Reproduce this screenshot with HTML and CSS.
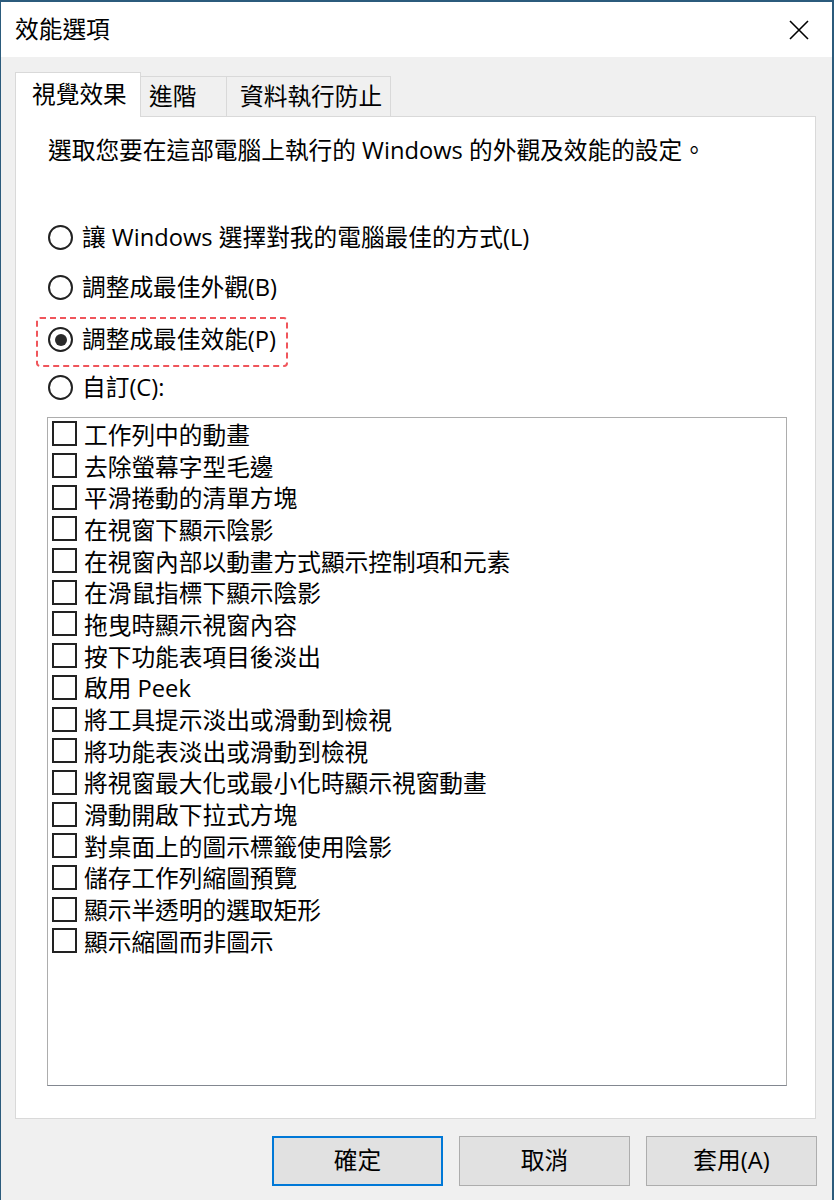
FILE: index.html
```html
<!DOCTYPE html>
<html lang="zh-Hant">
<head>
<meta charset="utf-8">
<title>效能選項</title>
<link rel="stylesheet" href="styles.css">
</head>
<body>
<div class="window">
  <header class="titlebar">
    <span class="title">效能選項</span>
    <svg class="close" width="20" height="20" viewBox="0 0 20 20" aria-hidden="true"><path d="M1 1L19 19M19 1L1 19" stroke="#000" stroke-width="1.6" fill="none"/></svg>
  </header>
  <main class="client">
    <div class="tabs">
      <div class="tab tab-active">視覺效果</div>
      <div class="tab tab-adv">進階</div>
      <div class="tab tab-dep">資料執行防止</div>
    </div>
    <section class="panel">
      <p class="desc">選取您要在這部電腦上執行的 Windows 的外觀及效能的設定。</p>
      <div class="radios">
        <div class="radio"><span class="radio-mark"></span><span>讓 Windows 選擇對我的電腦最佳的方式(L)</span></div>
        <div class="radio"><span class="radio-mark"></span><span>調整成最佳外觀(B)</span></div>
        <div class="radio radio-checked"><span class="radio-mark"></span><span>調整成最佳效能(P)</span>
          <svg class="highlight" width="252" height="50" viewBox="0 0 252 50" aria-hidden="true"><rect x="1" y="1" width="250" height="48" rx="3" fill="none" stroke="#f0555b" stroke-width="2" stroke-dasharray="6 4"/></svg>
        </div>
        <div class="radio radio-custom"><span class="radio-mark"></span><span>自訂(C):</span></div>
      </div>
      <ul class="list">
        <li class="item"><span class="box"></span>工作列中的動畫</li>
        <li class="item"><span class="box"></span>去除螢幕字型毛邊</li>
        <li class="item"><span class="box"></span>平滑捲動的清單方塊</li>
        <li class="item"><span class="box"></span>在視窗下顯示陰影</li>
        <li class="item"><span class="box"></span>在視窗內部以動畫方式顯示控制項和元素</li>
        <li class="item"><span class="box"></span>在滑鼠指標下顯示陰影</li>
        <li class="item"><span class="box"></span>拖曳時顯示視窗內容</li>
        <li class="item"><span class="box"></span>按下功能表項目後淡出</li>
        <li class="item"><span class="box"></span>啟用 Peek</li>
        <li class="item"><span class="box"></span>將工具提示淡出或滑動到檢視</li>
        <li class="item"><span class="box"></span>將功能表淡出或滑動到檢視</li>
        <li class="item"><span class="box"></span>將視窗最大化或最小化時顯示視窗動畫</li>
        <li class="item"><span class="box"></span>滑動開啟下拉式方塊</li>
        <li class="item"><span class="box"></span>對桌面上的圖示標籤使用陰影</li>
        <li class="item"><span class="box"></span>儲存工作列縮圖預覽</li>
        <li class="item"><span class="box"></span>顯示半透明的選取矩形</li>
        <li class="item"><span class="box"></span>顯示縮圖而非圖示</li>
      </ul>
    </section>
    <footer class="buttons">
      <button class="btn btn-default">確定</button>
      <button class="btn">取消</button>
      <button class="btn">套用(A)</button>
    </footer>
  </main>
</div>
</body>
</html>
```
FILE: styles.css
```css
html, body {
  margin: 0;
  padding: 0;
  background: #f0f0f0;
}
body {
  width: 834px;
  height: 1200px;
  overflow: hidden;
  font-family: "Open Sans", "Noto Sans CJK TC", sans-serif;
  font-size: 23.7px;
  color: #000;
}
.window {
  box-sizing: border-box;
  height: 1200px;
  border-top: 2px solid #2b5b7c;
  border-left: 1px solid #2b5b7c;
  border-right: 2px solid #2b5b7c;
  background: #f0f0f0;
  display: flex;
  flex-direction: column;
}
.titlebar {
  flex: none;
  height: 55px;
  background: #fff;
  display: flex;
  align-items: center;
  justify-content: space-between;
  padding: 0 23px 0 14px;
}
.title {
  line-height: 1;
}
.close {
  display: block;
}
.client {
  flex: 1;
  display: flex;
  flex-direction: column;
  padding: 15px 15px 0 14px;
  min-height: 0;
}
.tabs {
  flex: none;
  display: flex;
  align-items: flex-end;
  height: 45px;
  margin-bottom: -1px;
  position: relative;
  z-index: 1;
}
.tab {
  box-sizing: border-box;
  height: 40px;
  margin-bottom: 1px;
  border: 1px solid #d9d9d9;
  border-bottom: none;
  background: #f0f0f0;
  display: flex;
  align-items: center;
  white-space: nowrap;
  line-height: 1;
}
.tab-active {
  width: 126px;
  height: 45px;
  margin-bottom: 0;
  background: #fff;
  padding-left: 16px;
}
.tab-adv {
  width: 85px;
  border-left: none;
  border-right: none;
  padding-left: 8px;
}
.tab-dep {
  width: 165px;
  padding-left: 13px;
}
.panel {
  flex: 1;
  box-sizing: border-box;
  margin-right: 1px;
  background: #fff;
  border: 1px solid #d9d9d9;
  padding: 17px 0 0 32px;
  display: flex;
  flex-direction: column;
  min-height: 0;
}
.desc {
  margin: 0;
  line-height: 32px;
  white-space: nowrap;
}
.radios {
  margin-top: 54px;
  display: flex;
  flex-direction: column;
  gap: 18px;
}
.radio {
  position: relative;
  height: 32px;
  display: flex;
  align-items: center;
  gap: 9px;
  white-space: nowrap;
}
.radio-checked {
  margin-top: 2px;
}
.radio-custom {
  margin-top: -2px;
}
.radio-mark {
  box-sizing: border-box;
  width: 25px;
  height: 25px;
  margin-top: 3px;
  border: 2px solid #222;
  border-radius: 50%;
  display: flex;
  align-items: center;
  justify-content: center;
  flex: none;
}
.radio-checked .radio-mark::after {
  content: "";
  width: 12px;
  height: 12px;
  border-radius: 50%;
  background: #2a2a2a;
}
.highlight {
  position: absolute;
  left: -12px;
  top: -5px;
}
.list {
  box-sizing: border-box;
  list-style: none;
  margin: 15px 0 0 -1px;
  width: 740px;
  height: 669px;
  padding: 0 0 0 4px;
  border: 1px solid #adadad;
  border-bottom-color: #828790;
  background: #fff;
}
.item {
  height: 31.7px;
  display: flex;
  align-items: center;
  gap: 7px;
  white-space: nowrap;
}
.box {
  box-sizing: border-box;
  width: 25px;
  height: 25px;
  border: 2px solid #222;
  flex: none;
}
.buttons {
  flex: none;
  display: flex;
  justify-content: flex-end;
  gap: 16px;
  padding: 17px 0 14px;
}
.btn {
  box-sizing: border-box;
  width: 171px;
  height: 50px;
  background: #e1e1e1;
  border: 1px solid #adadad;
  font: inherit;
  color: #000;
  padding: 0;
  line-height: 1;
}
.btn-default {
  border: 2px solid #0078d7;
}
```
